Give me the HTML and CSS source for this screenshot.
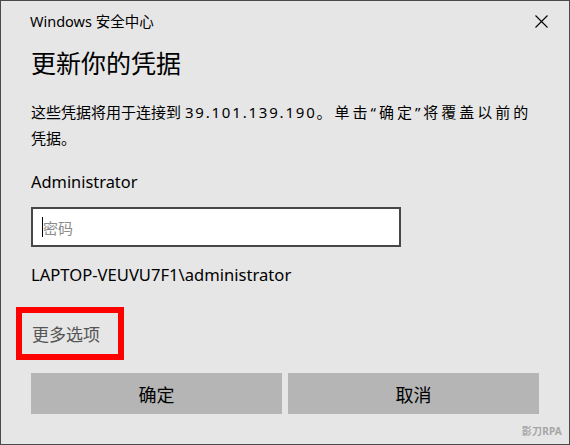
FILE: index.html
```html
<!DOCTYPE html>
<html lang="zh-CN">
<head>
    <meta charset="UTF-8">
    <meta name="viewport" content="width=device-width, initial-scale=1.0">
    <title>Windows 安全中心</title>
    <link rel="stylesheet" href="styles.css">
</head>
<body>
    <div class="dialog">
        <div class="titlebar">
            <span class="app-name">Windows 安全中心</span>
            <button class="close-btn" aria-label="关闭">
                <svg width="13" height="13" viewBox="0 0 13 13">
                    <path d="M0.5 0.5 L12.5 12.5 M12.5 0.5 L0.5 12.5" stroke="#000" stroke-width="1.1" fill="none"/>
                </svg>
            </button>
        </div>

        <div class="content">
            <h1 class="heading">更新你的凭据</h1>
            <p class="message">这些凭据将用于连接到 <span class="ip">39.101.139.190</span><span class="tail">。单击“确定”将覆盖以前的</span>凭据。</p>

            <div class="username">Administrator</div>

            <div class="password-box">
                <span class="caret"></span>
                <span class="placeholder">密码</span>
            </div>

            <div class="domain">LAPTOP-VEUVU7F1\administrator</div>
        </div>

        <div class="more-row">
            <span class="more-link">更多选项</span>
        </div>

        <div class="actions">
            <button class="btn">确定</button>
            <button class="btn">取消</button>
        </div>

        <!-- 水印 -->
        <div class="watermark">影刀RPA</div>
    </div>
</body>
</html>
```

FILE: styles.css
```css
* {
    box-sizing: border-box;
}

body {
    margin: 0;
    font-family: "Noto Sans", "Noto Sans CJK SC", sans-serif;
    color: #000;
}

.dialog {
    position: relative;
    width: 570px;
    height: 445px;
    background: #e6e6e6;
    border: 1px solid #4a4a4a;
}

.titlebar {
    display: flex;
    justify-content: space-between;
    align-items: center;
    height: 39px;
    padding: 0 21px 0 29px;
}

.app-name {
    font-size: 14.5px;
    line-height: 20px;
}

.close-btn {
    display: flex;
    padding: 2px 0 0 0;
    border: none;
    background: none;
}

.content {
    padding: 0 30px;
}

.heading {
    margin: 7px 0 0 0;
    font-size: 25px;
    font-weight: normal;
    line-height: 32px;
}

.message {
    margin: 20px 0 0 0;
    font-size: 15px;
    line-height: 26px;
}

.message .ip {
    letter-spacing: 1.8px;
}

.message .tail {
    letter-spacing: 3px;
}

.username {
    margin-top: 18px;
    font-size: 16.4px;
    line-height: 26px;
}

.password-box {
    display: flex;
    align-items: center;
    width: 370px;
    height: 40px;
    margin-top: 12px;
    padding-left: 9px;
    background: #fff;
    border: 2px solid #474747;
}

.caret {
    width: 1px;
    height: 20px;
    background: #000;
}

.placeholder {
    font-size: 15px;
    color: #8c8c8c;
}

.domain {
    margin-top: 15px;
    font-size: 16.6px;
    line-height: 26px;
}

.more-row {
    padding-left: 15px;
    margin-top: 19px;
}

.more-link {
    display: inline-block;
    padding: 2px 18px 0 10px;
    border: 6px solid #ff0000;
    font-size: 17px;
    line-height: 39px;
    color: #555;
}

.actions {
    display: flex;
    gap: 6px;
    margin-top: 13px;
    padding: 0 30px;
}

.btn {
    flex: 1;
    height: 41px;
    border: none;
    background: #b5b5b5;
    font-family: inherit;
    font-size: 18px;
    color: #000;
}

.watermark {
    position: absolute;
    right: 7px;
    bottom: 6px;
    font-size: 10px;
    font-weight: bold;
    color: #a6a6a6;
    letter-spacing: 0.2px;
}
```
